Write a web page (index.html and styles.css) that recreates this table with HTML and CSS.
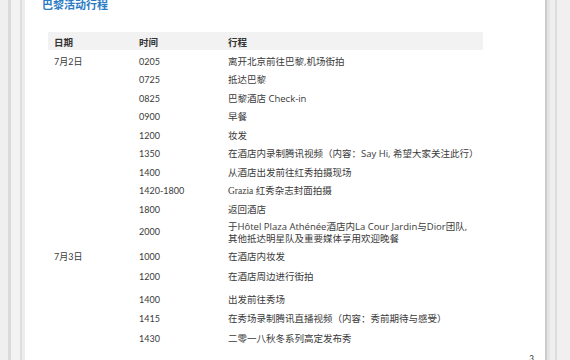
FILE: index.html
```html
<!DOCTYPE html>
<html lang="zh-CN">
<head>
<meta charset="utf-8">
<title>巴黎活动行程</title>
<link rel="stylesheet" href="styles.css">
</head>
<body>
<div class="page">
  <h1 class="title">巴黎活动行程</h1>
  <div class="table">
    <div class="head">
      <span>日期</span><span>时间</span><span>行程</span>
    </div>
    <div class="body">
      <div class="row"><span>7月2日</span><span>0205</span><span class="ev">离开北京前往巴黎,机场街拍</span></div>
      <div class="row"><span></span><span>0725</span><span class="ev">抵达巴黎</span></div>
      <div class="row"><span></span><span>0825</span><span class="ev">巴黎酒店 Check-in</span></div>
      <div class="row"><span></span><span>0900</span><span class="ev">早餐</span></div>
      <div class="row"><span></span><span>1200</span><span class="ev">妆发</span></div>
      <div class="row"><span></span><span>1350</span><span class="ev">在酒店内录制腾讯视频（内容：Say Hi, 希望大家关注此行）</span></div>
      <div class="row"><span></span><span>1400</span><span class="ev">从酒店出发前往红秀拍摄现场</span></div>
      <div class="row"><span></span><span>1420-1800</span><span class="ev"><em class="serif">Grazia</em> 红秀杂志封面拍摄</span></div>
      <div class="row h17"><span></span><span>1800</span><span class="ev">返回酒店</span></div>
      <div class="row h30"><span></span><span class="mid">2000</span><span class="ev">于Hôtel Plaza Athénée酒店内La Cour Jardin与Dior团队,<br>其他抵达明星队及重要媒体享用欢迎晚餐</span></div>
      <div class="row h20"><span>7月3日</span><span>1000</span><span class="ev">在酒店内妆发</span></div>
      <div class="row h23"><span></span><span>1200</span><span class="ev">在酒店周边进行街拍</span></div>
      <div class="row h19"><span></span><span>1400</span><span class="ev">出发前往秀场</span></div>
      <div class="row h20"><span></span><span>1415</span><span class="ev">在秀场录制腾讯直播视频（内容：秀前期待与感受）</span></div>
      <div class="row h20"><span></span><span>1430</span><span class="ev">二零一八秋冬系列高定发布秀</span></div>
    </div>
  </div>
  <div class="footer">3</div>
</div>
</body>
</html>
```
FILE: styles.css
```css
html, body {
  margin: 0;
  padding: 0;
}
body {
  width: 570px;
  height: 360px;
  overflow: hidden;
  font-family: "Lato", "Noto Sans CJK SC", sans-serif;
  color: #3a3a3a;
  background: linear-gradient(to right,
    #efefef 0px, #efefef 8px,
    #d9d9d9 8px, #dcdcdc 11px,
    #f3f3f3 11px, #f3f3f3 20px,
    #dedede 20px, #dedede 22px,
    #ececec 22px, #ececec 25px,
    #ffffff 25px, #ffffff 545px,
    #c9c9c9 545px, #cfcfcf 547px,
    #e2e2e2 547px, #e6e6e6 550px,
    #efefef 550px, #efefef 555px,
    #dddddd 555px, #dddddd 557px,
    #f0f0f0 557px, #f0f0f0 570px);
}
.page {
  margin-left: 25px;
  width: 520px;
  height: 360px;
  background: #fff;
  padding-left: 17px;
  box-sizing: border-box;
}
.title {
  margin: -3px 0 0;
  font-size: 11px;
  line-height: 14px;
  font-weight: 700;
  color: #2b7bc6;
  font-family: "Noto Sans CJK SC", sans-serif;
}
.table {
  margin: 21px 0 0 6px;
  width: 435px;
}
.head {
  display: grid;
  grid-template-columns: 85px 89px 1fr;
  height: 18px;
  align-items: center;
  padding: 1px 0 0 6px;
  box-sizing: border-box;
  background: #f1f2f1;
  font-family: "Noto Sans CJK SC", sans-serif;
  font-weight: 700;
  font-size: 9.5px;
  color: #333;
}
.body {
  padding-top: 5.7px;
}
.row {
  display: grid;
  grid-template-columns: 85px 89px 1fr;
  padding-left: 6px;
  height: 18.5px;
  font-size: 9px;
  line-height: 12px;
  align-items: start;
  white-space: nowrap;
}
.row.h17 { height: 17.3px; }
.row.h30 { height: 30px; }
.row.h20 { height: 19.7px; }
.row.h23 { height: 23.3px; }
.row.h19 { height: 19px; }
.row .mid {
  margin-top: 5px;
}
.ev {
  font-family: "Open Sans", "Noto Sans CJK SC", sans-serif;
  font-size: 9.5px;
}
.serif {
  font-family: "Liberation Serif", serif;
  font-style: normal;
  font-size: 9.5px;
}
.footer {
  text-align: right;
  padding-right: 11px;
  font-size: 8px;
  line-height: 10px;
  margin-top: 1px;
  color: #222;
}
```
